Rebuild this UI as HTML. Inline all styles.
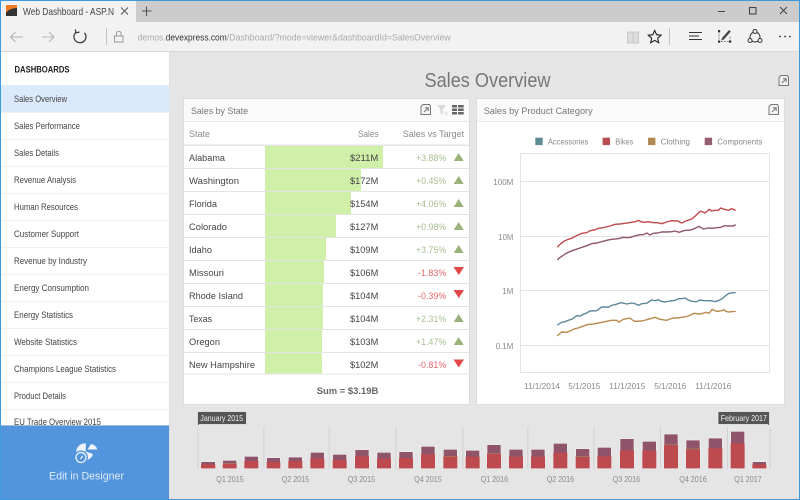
<!DOCTYPE html>
<html><head><meta charset="utf-8"><title>Web Dashboard</title>
<style>
html,body{margin:0;padding:0;width:800px;height:500px;overflow:hidden;background:#e5e5e5}
svg{display:block;position:absolute;left:0;top:0;filter:blur(.3px)}
text{font-family:"Liberation Sans",sans-serif}
.m{font-size:8.8px;fill:#444}
.r{font-size:9.6px;fill:#444}
.h{font-size:9.6px;fill:#8a8a8a}
.t{font-size:9.6px;fill:#777}
.g{font-size:9.6px;fill:#a6bf91}
.d{font-size:9.6px;fill:#e2686a}
.l{font-size:8.6px;fill:#888}
.a{font-size:8.6px;fill:#8a8a8a}
.q{font-size:8.6px;fill:#8a8a8a}
.tip{font-size:8.4px;fill:#f2f2f2}
.u{font-size:9.6px;fill:#aaa}
</style></head><body>
<svg width="800" height="500" viewBox="0 0 800 500" xmlns="http://www.w3.org/2000/svg">
<!-- chrome -->
<rect width="800" height="500" fill="#e5e5e5"/>
<rect x="0" y="0" width="800" height="22" fill="#cccccc"/>
<rect x="1" y="1" width="135" height="21" fill="#f2f2f2"/>
<rect x="0" y="22" width="800" height="29" fill="#f2f2f2"/>
<rect x="0" y="51" width="800" height="1" fill="#d9d9d9"/>
<!-- favicon -->
<rect x="6" y="5" width="11" height="11" fill="#ee7a22"/>
<path d="M6 16V12.5C9 9.5 13 8 17 8V16Z" fill="#333"/>
<text x="23" y="15" font-size="10.4" fill="#444" textLength="91" lengthAdjust="spacingAndGlyphs">Web Dashboard - ASP.N</text>
<path d="M121 7.5l7 7M128 7.5l-7 7" stroke="#555" stroke-width="1" fill="none"/>
<path d="M146.500 6.500v9.500M142 11h9.500" stroke="#555" stroke-width="1.100" fill="none"/>
<!-- nav -->
<path d="M23 37H10.500M15.500 32l-5 5 5 5" stroke="#b5b5b5" stroke-width="1.100" fill="none"/>
<path d="M42 37H54M49 32l5 5-5 5" stroke="#b5b5b5" stroke-width="1.100" fill="none"/>
<path d="M76 32.200A6 6 0 1 0 84.500 32.800M75.200 29.500L76.200 32.800 79.500 32" stroke="#333" stroke-width="1.200" fill="none"/>
<rect x="106" y="28" width="1" height="17" fill="#c4c4c4"/>
<rect x="114.500" y="36" width="8.500" height="6" fill="none" stroke="#999" stroke-width="1"/>
<path d="M116.500 36v-2.500a2.300 2.300 0 0 1 4.600 0V36" fill="none" stroke="#999" stroke-width="1"/>
<text class="u" x="137.700" y="40.500" textLength="28" lengthAdjust="spacingAndGlyphs">demos.</text>
<text class="u" x="165.700" y="40.500" style="fill:#333" textLength="61" lengthAdjust="spacingAndGlyphs">devexpress.com</text>
<text class="u" x="226.700" y="40.500" textLength="224" lengthAdjust="spacingAndGlyphs">/Dashboard/?mode=viewer&amp;dashboardId=SalesOverview</text>
<!-- window controls -->
<rect x="718" y="11" width="7" height="1" fill="#444"/>
<rect x="749.500" y="7.500" width="6.500" height="6.500" fill="none" stroke="#444" stroke-width="1.100"/>
<path d="M780 7l7 7M787 7l-7 7" stroke="#444" stroke-width="1" fill="none"/>
<!-- toolbar right -->
<path d="M627.500 32h5.500v11h-5.500zM633 32h5.500v11H633z" fill="#ddd" stroke="#c8c8c8" stroke-width="1"/>
<path d="M654.700 30.500l1.900 4.200 4.500.5-3.400 3 1 4.500-4-2.300-4 2.300 1-4.500-3.400-3 4.500-.5z" fill="none" stroke="#222" stroke-width="1.100"/>
<rect x="669" y="28" width="1" height="17" fill="#c4c4c4"/>
<path d="M689 32.500h13M689 36h10M689 39.500h13" stroke="#333" stroke-width="1.100" fill="none"/>
<path d="M719 31.500v10h11v-6" fill="none" stroke="#888" stroke-width="1" stroke-dasharray="2 1"/>
<path d="M722 38l7-8 1.800 1.500-7 8-2.500 1z" fill="#444"/>
<rect x="718" y="30" width="2.200" height="2.200" fill="#333"/><rect x="718" y="40.500" width="2.200" height="2.200" fill="#333"/><rect x="729" y="40.500" width="2.200" height="2.200" fill="#333"/>
<circle cx="755" cy="37" r="5" fill="none" stroke="#333" stroke-width="1"/>
<circle cx="755" cy="31.500" r="2" fill="#f2f2f2" stroke="#333"/><circle cx="750" cy="40.500" r="2" fill="#f2f2f2" stroke="#333"/><circle cx="760" cy="40.500" r="2" fill="#f2f2f2" stroke="#333"/>
<circle cx="780" cy="36.500" r=".9" fill="#333"/><circle cx="785" cy="36.500" r=".9" fill="#333"/><circle cx="790" cy="36.500" r=".9" fill="#333"/>
<!-- sidebar -->
<rect x="1" y="52" width="168" height="373" fill="#fff"/>
<rect x="169" y="52" width="1" height="448" fill="#e0e0e0"/>
<rect x="1" y="85" width="168" height="27" fill="#dbe9fc"/>
<g fill="#f0f0f0">
<rect x="1" y="112" width="168" height="1"/><rect x="1" y="139" width="168" height="1"/><rect x="1" y="166" width="168" height="1"/><rect x="1" y="193" width="168" height="1"/><rect x="1" y="220" width="168" height="1"/><rect x="1" y="247" width="168" height="1"/><rect x="1" y="274" width="168" height="1"/><rect x="1" y="301" width="168" height="1"/><rect x="1" y="328" width="168" height="1"/><rect x="1" y="355" width="168" height="1"/><rect x="1" y="382" width="168" height="1"/><rect x="1" y="409" width="168" height="1"/>
</g>
<text x="14.500" y="72.500" font-size="8.800" font-weight="bold" fill="#222" textLength="55" lengthAdjust="spacingAndGlyphs">DASHBOARDS</text>
<text class="m" x="14" y="102" textLength="53" lengthAdjust="spacingAndGlyphs">Sales Overview</text>
<text class="m" x="14" y="129" textLength="66" lengthAdjust="spacingAndGlyphs">Sales Performance</text>
<text class="m" x="14" y="156" textLength="45" lengthAdjust="spacingAndGlyphs">Sales Details</text>
<text class="m" x="14" y="183" textLength="62" lengthAdjust="spacingAndGlyphs">Revenue Analysis</text>
<text class="m" x="14" y="210" textLength="64" lengthAdjust="spacingAndGlyphs">Human Resources</text>
<text class="m" x="14" y="237" textLength="65" lengthAdjust="spacingAndGlyphs">Customer Support</text>
<text class="m" x="14" y="264" textLength="73" lengthAdjust="spacingAndGlyphs">Revenue by Industry</text>
<text class="m" x="14" y="291" textLength="75" lengthAdjust="spacingAndGlyphs">Energy Consumption</text>
<text class="m" x="14" y="318" textLength="59" lengthAdjust="spacingAndGlyphs">Energy Statistics</text>
<text class="m" x="14" y="345" textLength="63" lengthAdjust="spacingAndGlyphs">Website Statistics</text>
<text class="m" x="14" y="372" textLength="102" lengthAdjust="spacingAndGlyphs">Champions League Statistics</text>
<text class="m" x="14" y="399" textLength="52" lengthAdjust="spacingAndGlyphs">Product Details</text>
<text class="m" x="14" y="425" textLength="87" lengthAdjust="spacingAndGlyphs">EU Trade Overview 2015</text>
<rect x="1" y="425.500" width="168" height="74" fill="#5295dc"/>
<path d="M85.500 451.500L93 454A8.500 8.500 0 1 1 86 443.500Z" fill="#eef4fb"/>
<path d="M87.500 449.500L91 444A8 8 0 0 1 97.300 449.500Z" fill="#eef4fb"/>
<circle cx="81" cy="457.500" r="7" fill="#5295dc"/>
<circle cx="81" cy="457.500" r="5" fill="none" stroke="#eef4fb" stroke-width="1.300"/>
<path d="M80.500 459l2.200-3.200" stroke="#eef4fb" stroke-width="1.200"/>
<text x="49" y="479.500" font-size="11.200" fill="#dfebf8" textLength="75" lengthAdjust="spacingAndGlyphs">Edit in Designer</text>
<!-- window frame -->
<rect x="0" y="0" width="800" height="1" fill="#3d9ae0"/>
<rect x="0" y="0" width="1" height="500" fill="#3d9ae0"/>
<rect x="799" y="0" width="1" height="500" fill="#3d9ae0"/>
<rect x="0" y="499" width="800" height="1" fill="#3d9ae0"/>
<!-- title -->
<text x="424.500" y="87" font-size="20" fill="#777" textLength="126" lengthAdjust="spacingAndGlyphs">Sales Overview</text>
<g fill="none" stroke="#777" stroke-width="1">
<path d="M787.500 75.500h-6.500l-2 2v8h9.500v-8z" fill="#eee"/>
<path d="M782 83l4-4M783 78.800h3.200V82" stroke-width="1"/>
</g>
<!-- left panel -->
<rect x="183.500" y="98.500" width="286" height="306" fill="#fff" stroke="#dcdcdc"/>
<rect x="184" y="99" width="285" height="22" fill="#fafafa"/>
<rect x="184" y="121" width="285" height="1" fill="#ececec"/>
<text class="t" x="191" y="114" textLength="57" lengthAdjust="spacingAndGlyphs">Sales by State</text>
<g fill="none" stroke="#777" stroke-width="1">
<path d="M429.500 104.500h-6.500l-2 2v8h9.500v-8z" fill="#f4f4f4"/>
<path d="M424 112l4-4M425 107.800h3.200V111"/>
</g>
<path d="M437 105h9l-3.500 4.500v5l-2-1.500v-3.500z" fill="#d8d8d8"/>
<path d="M444.500 112l3 3M447.500 112l-3 3" stroke="#e0e0e0" stroke-width=".8"/>
<g fill="#666"><rect x="452" y="105" width="5" height="2.500"/><rect x="458" y="105" width="5.700" height="2.500"/><rect x="452" y="108.500" width="5" height="2.500"/><rect x="458" y="108.500" width="5.700" height="2.500"/><rect x="452" y="112" width="5" height="2.500"/><rect x="458" y="112" width="5.700" height="2.500"/></g>
<text class="h" x="189" y="137" textLength="21" lengthAdjust="spacingAndGlyphs">State</text>
<text class="h" x="358" y="137" textLength="20.500" lengthAdjust="spacingAndGlyphs">Sales</text>
<text class="h" x="402.700" y="137" textLength="61.500" lengthAdjust="spacingAndGlyphs">Sales vs Target</text>
<rect x="184" y="144.500" width="285" height="1.500" fill="#e4e4e4"/>
<g fill="#e4e4e4">
<rect x="184" y="168" width="285" height="1"/><rect x="184" y="191" width="285" height="1"/><rect x="184" y="214" width="285" height="1"/><rect x="184" y="237" width="285" height="1"/><rect x="184" y="260" width="285" height="1"/><rect x="184" y="283" width="285" height="1"/><rect x="184" y="306" width="285" height="1"/><rect x="184" y="329" width="285" height="1"/><rect x="184" y="352" width="285" height="1"/><rect x="184" y="373.500" width="285" height="1"/>
</g>
<g fill="#d0efa8">
<rect x="265" y="146" width="118" height="22"/>
<rect x="265" y="169" width="96" height="22"/>
<rect x="265" y="192" width="86" height="22"/>
<rect x="265" y="215" width="71" height="22"/>
<rect x="265" y="238" width="61" height="22"/>
<rect x="265" y="261" width="59" height="22"/>
<rect x="265" y="284" width="58" height="22"/>
<rect x="265" y="307" width="58" height="22"/>
<rect x="265" y="330" width="57" height="22"/>
<rect x="265" y="353" width="57" height="20.500"/>
</g>
<text class="r" x="189" y="161" textLength="36" lengthAdjust="spacingAndGlyphs">Alabama</text>
<text class="r" x="189" y="184" textLength="50" lengthAdjust="spacingAndGlyphs">Washington</text>
<text class="r" x="189" y="207" textLength="28" lengthAdjust="spacingAndGlyphs">Florida</text>
<text class="r" x="189" y="230" textLength="38" lengthAdjust="spacingAndGlyphs">Colorado</text>
<text class="r" x="189" y="253" textLength="23" lengthAdjust="spacingAndGlyphs">Idaho</text>
<text class="r" x="189" y="276" textLength="35" lengthAdjust="spacingAndGlyphs">Missouri</text>
<text class="r" x="189" y="299" textLength="54" lengthAdjust="spacingAndGlyphs">Rhode Island</text>
<text class="r" x="189" y="322" textLength="23" lengthAdjust="spacingAndGlyphs">Texas</text>
<text class="r" x="189" y="345" textLength="31" lengthAdjust="spacingAndGlyphs">Oregon</text>
<text class="r" x="189" y="368" textLength="66" lengthAdjust="spacingAndGlyphs">New Hampshire</text>
<g>
<text class="r" x="350" y="161" textLength="28.300" lengthAdjust="spacingAndGlyphs">$211M</text>
<text class="r" x="350" y="184" textLength="28.300" lengthAdjust="spacingAndGlyphs">$172M</text>
<text class="r" x="350" y="207" textLength="28.300" lengthAdjust="spacingAndGlyphs">$154M</text>
<text class="r" x="350" y="230" textLength="28.300" lengthAdjust="spacingAndGlyphs">$127M</text>
<text class="r" x="350" y="253" textLength="28.300" lengthAdjust="spacingAndGlyphs">$109M</text>
<text class="r" x="350" y="276" textLength="28.300" lengthAdjust="spacingAndGlyphs">$106M</text>
<text class="r" x="350" y="299" textLength="28.300" lengthAdjust="spacingAndGlyphs">$104M</text>
<text class="r" x="350" y="322" textLength="28.300" lengthAdjust="spacingAndGlyphs">$104M</text>
<text class="r" x="350" y="345" textLength="28.300" lengthAdjust="spacingAndGlyphs">$103M</text>
<text class="r" x="350" y="368" textLength="28.300" lengthAdjust="spacingAndGlyphs">$102M</text>
</g>
<text class="g" x="416" y="161" textLength="30.300" lengthAdjust="spacingAndGlyphs">+3.88%</text>
<text class="g" x="416" y="184" textLength="30.300" lengthAdjust="spacingAndGlyphs">+0.45%</text>
<text class="g" x="416" y="207" textLength="30.300" lengthAdjust="spacingAndGlyphs">+4.06%</text>
<text class="g" x="416" y="230" textLength="30.300" lengthAdjust="spacingAndGlyphs">+0.98%</text>
<text class="g" x="416" y="253" textLength="30.300" lengthAdjust="spacingAndGlyphs">+3.75%</text>
<text class="d" x="418" y="276" textLength="28.300" lengthAdjust="spacingAndGlyphs">-1.83%</text>
<text class="d" x="418" y="299" textLength="28.300" lengthAdjust="spacingAndGlyphs">-0.39%</text>
<text class="g" x="416" y="322" textLength="30.300" lengthAdjust="spacingAndGlyphs">+2.31%</text>
<text class="g" x="416" y="345" textLength="30.300" lengthAdjust="spacingAndGlyphs">+1.47%</text>
<text class="d" x="418" y="368" textLength="28.300" lengthAdjust="spacingAndGlyphs">-0.81%</text>
<g fill="#98b27a">
<path d="M458.700 153l5 8h-10z"/><path d="M458.700 176l5 8h-10z"/><path d="M458.700 199l5 8h-10z"/><path d="M458.700 222l5 8h-10z"/><path d="M458.700 245l5 8h-10z"/><path d="M458.700 314l5 8h-10z"/><path d="M458.700 337l5 8h-10z"/>
</g>
<g fill="#e2474a">
<path d="M453.500 267h10.500l-5.250 8z"/><path d="M453.500 290h10.500l-5.250 8z"/><path d="M453.500 359.500h10.500l-5.250 8z"/>
</g>
<text x="316.700" y="394" font-size="9.600" font-weight="bold" fill="#666" textLength="61.600" lengthAdjust="spacingAndGlyphs">Sum = $3.19B</text>
<!-- right panel -->
<rect x="476.500" y="98.500" width="308" height="306" fill="#fff" stroke="#dcdcdc"/>
<rect x="477" y="99" width="307" height="22" fill="#fafafa"/>
<rect x="477" y="121" width="307" height="1" fill="#ececec"/>
<text class="t" x="483.700" y="114" textLength="109" lengthAdjust="spacingAndGlyphs">Sales by Product Category</text>
<g fill="none" stroke="#777" stroke-width="1">
<path d="M777.500 104.500h-6.500l-2 2v8h9.500v-8z" fill="#f4f4f4"/>
<path d="M772 112l4-4M773 107.800h3.200V111"/>
</g>
<rect x="535.300" y="137.700" width="7.400" height="7.400" fill="#5f8b95"/>
<rect x="602.600" y="137.700" width="7.400" height="7.400" fill="#ba4d51"/>
<rect x="648" y="137.700" width="7.400" height="7.400" fill="#af8a53"/>
<rect x="704.700" y="137.700" width="7.400" height="7.400" fill="#955f71"/>
<text class="l" x="548" y="144.500" textLength="40.300" lengthAdjust="spacingAndGlyphs">Accessories</text>
<text class="l" x="615.300" y="144.500" textLength="18" lengthAdjust="spacingAndGlyphs">Bikes</text>
<text class="l" x="660.700" y="144.500" textLength="29.300" lengthAdjust="spacingAndGlyphs">Clothing</text>
<text class="l" x="717.300" y="144.500" textLength="45" lengthAdjust="spacingAndGlyphs">Components</text>
<g fill="none" stroke="#e4e4e4" stroke-width="1">
<path d="M520.500 153.500H769.500V372.500H520.500Z"/>
<path d="M520.500 181.500H769.500M520.500 236.500H769.500M520.500 290.500H769.500M520.500 345.500H769.500"/>
</g>
<text class="a" x="493.300" y="185" textLength="20" lengthAdjust="spacingAndGlyphs">100M</text>
<text class="a" x="498.300" y="240" textLength="15" lengthAdjust="spacingAndGlyphs">10M</text>
<text class="a" x="502.300" y="294" textLength="11" lengthAdjust="spacingAndGlyphs">1M</text>
<text class="a" x="495.700" y="349" textLength="17.600" lengthAdjust="spacingAndGlyphs">0.1M</text>
<text class="a" x="524" y="389" textLength="36" lengthAdjust="spacingAndGlyphs">11/1/2014</text>
<text class="a" x="568.300" y="389" textLength="32" lengthAdjust="spacingAndGlyphs">5/1/2015</text>
<text class="a" x="609.300" y="389" textLength="36" lengthAdjust="spacingAndGlyphs">11/1/2015</text>
<text class="a" x="654.300" y="389" textLength="32" lengthAdjust="spacingAndGlyphs">5/1/2016</text>
<text class="a" x="695.300" y="389" textLength="36" lengthAdjust="spacingAndGlyphs">11/1/2016</text>
<g transform="translate(475,120) scale(.33333)" fill="none" stroke-width="4.200" stroke-linejoin="round">
<polyline stroke="#bf4a50" points="247,382 255,373 265,365 277,359 290,355 305,347 320,340 335,338 345,332 358,330 370,325 385,323 405,318 420,313 435,312 450,310 470,307 482,305 490,301 500,306 510,307 520,305 535,308 548,308 560,311 575,306 590,302 608,303 620,309 635,302 650,297 662,287 675,274 682,275 690,279 703,268 710,273 720,271 730,271 737,264 748,268 760,271 770,266 782,271"/>
<polyline stroke="#8f566c" points="247,420 254,413 262,408 270,402 280,397 300,389 315,384 330,379 350,371 365,369 380,365 395,361 410,358 430,356 445,352 458,353 470,351 482,347 495,344 505,344 516,339 524,345 535,340 548,339 560,336 575,336 590,335 600,333 612,337 630,331 640,331 650,329 660,325 672,319 685,327 700,324 712,325 725,323 738,322 748,317 762,318 775,318 782,314"/>
</g>
<g transform="translate(475,260) scale(.33333)" fill="none" stroke-width="4.200" stroke-linejoin="round">
<polyline stroke="#5c8898" points="247,195 260,187 270,185 280,181 292,177 305,167 315,168 325,163 335,159 345,153 365,152 380,141 392,141 400,142 410,136 420,134 432,130 440,128 455,132 470,129 480,131 490,136 500,131 515,130 530,120 540,122 550,119 558,124 570,126 585,123 600,121 612,116 620,116 630,114 640,120 650,124 665,125 675,120 688,122 700,122 712,123 722,125 732,121 742,116 752,107 762,100 772,98 782,98"/>
<polyline stroke="#b88a50" points="247,228 255,220 260,216 275,217 287,212 300,206 310,204 320,200 340,193 350,193 360,191 375,188 395,184 410,181 425,181 432,186 445,178 465,174 472,180 480,184 500,183 512,180 520,178 530,175 540,172 555,178 575,181 585,177 595,174 607,174 620,172 632,170 640,168 650,163 658,160 670,162 680,161 695,157 702,160 712,148 722,153 730,154 740,152 748,149 752,154 760,156 770,155 782,154"/>
</g>
<!-- range selector -->
<g transform="translate(170,405) scale(.33333)">
<g fill="#d2d2d2"><rect x="82" y="65" width="3" height="126"/><rect x="280" y="65" width="3" height="126"/><rect x="476" y="65" width="3" height="126"/><rect x="676" y="65" width="3" height="126"/><rect x="877" y="65" width="3" height="126"/></g>
<path fill="#8f5469" stroke="#f0f0f0" stroke-width="2" d="M93 170h43v20h-43zM158 166h42v24h-42zM223 154h42v36h-42zM290 158h41v32h-41zM355 156h42v34h-42zM421 142h42v48h-42zM488 148h42v42h-42zM555 134h42v56h-42zM621 142h42v48h-42zM687 140h42v50h-42zM753 124h42v66h-42zM820 133h42v57h-42zM887 136h42v54h-42z"/>
<path fill="#bc4a4f" d="M93 178h43v12h-43zM158 176h42v14h-42zM223 168h42v22h-42zM290 171h41v19h-41zM355 168h42v22h-42zM421 160h42v30h-42zM488 165h42v25h-42zM555 154h42v36h-42zM621 160h42v30h-42zM687 159h42v31h-42zM753 148h42v42h-42zM820 154h42v36h-42zM887 155h42v35h-42z"/>
<path stroke="#b0835a" stroke-width="2" d="M158 176h42M820 154h42"/>
</g>
<g transform="translate(480,405) scale(.33333)">
<g fill="#d2d2d2"><rect x="142" y="65" width="3" height="126"/><rect x="340" y="65" width="3" height="126"/><rect x="540" y="65" width="3" height="126"/><rect x="741" y="65" width="3" height="126"/><rect x="869" y="65" width="3" height="126"/></g>
<path fill="#8f5469" stroke="#f0f0f0" stroke-width="2" d="M21 119h42v71h-42zM87 133h42v57h-42zM153 133h42v57h-42zM220 115h42v75h-42zM287 131h42v59h-42zM352 127h42v63h-42zM420 101h42v89h-42zM487 109h42v81h-42zM552 87h42v103h-42zM618 105h42v85h-42zM685 99h42v91h-42zM752 79h42v111h-42zM817 170h42v20h-42z"/>
<path fill="#bc4a4f" d="M21 147h42v43h-42zM87 155h42v35h-42zM153 155h42v35h-42zM220 143h42v47h-42zM287 155h42v35h-42zM352 154h42v36h-42zM420 136h42v54h-42zM487 137h42v53h-42zM552 121h42v69h-42zM618 134h42v56h-42zM685 130h42v60h-42zM752 115h42v75h-42zM817 178h42v12h-42z"/>
<path stroke="#b0835a" stroke-width="2" d="M21 146h42M287 155h42M552 119h42M618 132h42"/>
</g>
<path d="M197.500 411.500H246.500V424.500H199.500L197.500 426.500Z" fill="#555" stroke="#f2f2f2" stroke-width=".7"/>
<text class="tip" x="200.300" y="421" textLength="42.700" lengthAdjust="spacingAndGlyphs">January 2015</text>
<path d="M718 411.500H769.500V426.500L767.500 424.500H718Z" fill="#555" stroke="#f2f2f2" stroke-width=".7"/>
<text class="tip" x="720.700" y="421" textLength="46.300" lengthAdjust="spacingAndGlyphs">February 2017</text>
<text class="q" x="216.300" y="482" textLength="27.400" lengthAdjust="spacingAndGlyphs">Q1 2015</text>
<text class="q" x="281.700" y="482" textLength="27.400" lengthAdjust="spacingAndGlyphs">Q2 2015</text>
<text class="q" x="347.700" y="482" textLength="27.400" lengthAdjust="spacingAndGlyphs">Q3 2015</text>
<text class="q" x="414.300" y="482" textLength="27.400" lengthAdjust="spacingAndGlyphs">Q4 2015</text>
<text class="q" x="480.700" y="482" textLength="27.400" lengthAdjust="spacingAndGlyphs">Q1 2016</text>
<text class="q" x="546.700" y="482" textLength="27.400" lengthAdjust="spacingAndGlyphs">Q2 2016</text>
<text class="q" x="612.700" y="482" textLength="27.400" lengthAdjust="spacingAndGlyphs">Q3 2016</text>
<text class="q" x="679.300" y="482" textLength="27.400" lengthAdjust="spacingAndGlyphs">Q4 2016</text>
<text class="q" x="734.300" y="482" textLength="27.400" lengthAdjust="spacingAndGlyphs">Q1 2017</text>
</svg>
</body></html>
